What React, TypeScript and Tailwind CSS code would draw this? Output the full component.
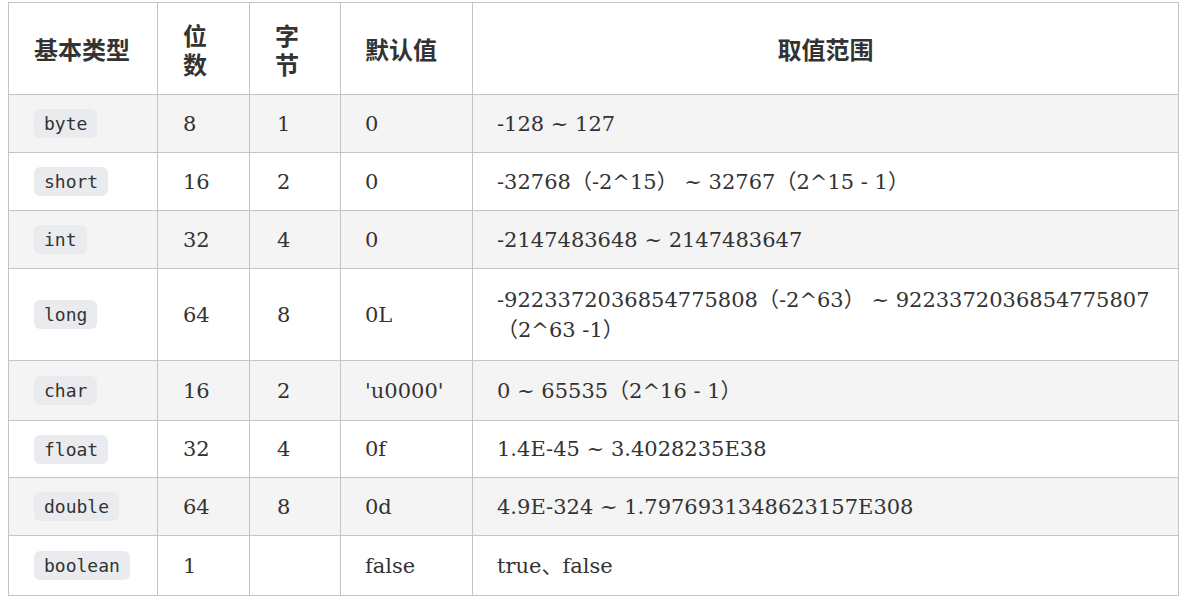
import React from "react";

type Row = {
  type: string;
  bits: string;
  bytes: string;
  def: string;
  range: string;
  h: string;
};

const rows: Row[] = [
  { type: "byte", bits: "8", bytes: "1", def: "0", range: "-128 ~ 127", h: "h-[58px]" },
  { type: "short", bits: "16", bytes: "2", def: "0", range: "-32768（-2^15） ~ 32767（2^15 - 1）", h: "h-[58px]" },
  { type: "int", bits: "32", bytes: "4", def: "0", range: "-2147483648 ~ 2147483647", h: "h-[58px]" },
  {
    type: "long",
    bits: "64",
    bytes: "8",
    def: "0L",
    range: "-9223372036854775808（-2^63） ~ 9223372036854775807（2^63 -1）",
    h: "h-[92px]",
  },
  { type: "char", bits: "16", bytes: "2", def: "'u0000'", range: "0 ~ 65535（2^16 - 1）", h: "h-[60px]" },
  { type: "float", bits: "32", bytes: "4", def: "0f", range: "1.4E-45 ~ 3.4028235E38", h: "h-[57px]" },
  { type: "double", bits: "64", bytes: "8", def: "0d", range: "4.9E-324 ~ 1.7976931348623157E308", h: "h-[58px]" },
  { type: "boolean", bits: "1", bytes: "", def: "false", range: "true、false", h: "h-[60px]" },
];

const serif = "font-['DejaVu_Serif','Noto_Sans_CJK_SC',serif]";

export default function App() {
  return (
    <div className="min-h-screen bg-white pt-[2px] pl-[8px] text-[#333]">
      <table className="w-[1170px] table-fixed border-collapse border border-[#c4c4c4]">
        <colgroup>
          <col className="w-[149px]" />
          <col className="w-[92px]" />
          <col className="w-[91px]" />
          <col className="w-[132px]" />
          <col className="w-[706px]" />
        </colgroup>
        <thead>
          <tr className="h-[92px] bg-white font-['Noto_Sans_CJK_SC',sans-serif] text-[24px] font-bold leading-[29px]">
            <th className="border border-[#c4c4c4] px-[25px] text-left align-middle">基本类型</th>
            <th className="border border-[#c4c4c4] px-[25px] text-left align-middle">位数</th>
            <th className="border border-[#c4c4c4] px-[25px] text-left align-middle">字节</th>
            <th className="border border-[#c4c4c4] px-[24px] text-left align-middle">默认值</th>
            <th className="border border-[#c4c4c4] px-[25px] text-center align-middle">取值范围</th>
          </tr>
        </thead>
        <tbody>
          {rows.map((r, i) => (
            <tr
              key={r.type}
              className={`${r.h} ${i % 2 === 0 ? "bg-[#f4f4f4]" : "bg-white"} ${serif} text-[21px] leading-[30px]`}
            >
              <td className="border border-[#c4c4c4] px-[25px] align-middle">
                <code className="rounded-[6px] bg-[#eaebee] px-[10px] py-[4px] font-['DejaVu_Sans_Mono',monospace] text-[18px] text-[#333]">
                  {r.type}
                </code>
              </td>
              <td className="border border-[#c4c4c4] px-[25px] align-middle">{r.bits}</td>
              <td className="border border-[#c4c4c4] px-[27px] align-middle">{r.bytes}</td>
              <td className="border border-[#c4c4c4] px-[24px] align-middle">{r.def}</td>
              <td className="border border-[#c4c4c4] px-[24px] align-middle">{r.range}</td>
            </tr>
          ))}
        </tbody>
      </table>
    </div>
  );
}
